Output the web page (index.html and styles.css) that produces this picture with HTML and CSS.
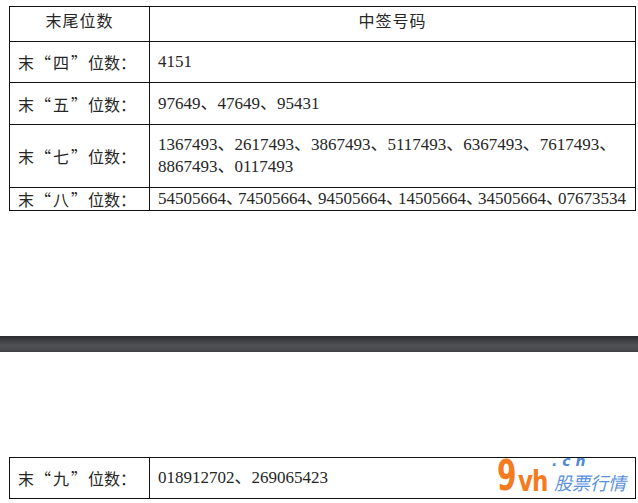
FILE: index.html
```html
<!DOCTYPE html>
<html lang="zh-CN">
<head>
<meta charset="utf-8">
<link rel="stylesheet" href="styles.css">
</head>
<body>
<div class="page">
  <table class="grid">
    <colgroup><col class="c1"><col class="c2"></colgroup>
    <tr class="r-head">
      <th>末尾位数</th>
      <th>中签号码</th>
    </tr>
    <tr class="r-a">
      <td class="lbl">末<span class="ql">“</span>四<span class="qr">”</span>位数：</td>
      <td class="num">4151</td>
    </tr>
    <tr class="r-b">
      <td class="lbl">末<span class="ql">“</span>五<span class="qr">”</span>位数：</td>
      <td class="num">97649、47649、95431</td>
    </tr>
    <tr class="r-c">
      <td class="lbl">末<span class="ql">“</span>七<span class="qr">”</span>位数：</td>
      <td class="num">1367493、2617493、3867493、5117493、6367493、7617493、8867493、0117493</td>
    </tr>
    <tr class="r-d">
      <td class="lbl">末<span class="ql">“</span>八<span class="qr">”</span>位数：</td>
      <td class="num tight">54505664<span class="dun">、</span>74505664<span class="dun">、</span>94505664<span class="dun">、</span>14505664<span class="dun">、</span>34505664<span class="dun">、</span>07673534</td>
    </tr>
  </table>

  <div class="divider"></div>

  <div class="second">
    <table class="grid">
      <colgroup><col class="c1"><col class="c2"></colgroup>
      <tr class="r-e">
        <td class="lbl">末<span class="ql">“</span>九<span class="qr">”</span>位数：</td>
        <td class="num">018912702、269065423</td>
      </tr>
    </table>
    <div class="logo">
      <span class="nine">9</span>
      <span class="vh">vh</span>
      <span class="cn">.cn</span>
      <span class="gp">股票行情</span>
    </div>
  </div>
</div>
</body>
</html>
```

FILE: styles.css
```css
html, body {
  margin: 0;
  padding: 0;
  background: #fff;
}
.page {
  padding-top: 6px;
  font-family: "Liberation Serif", "Noto Sans CJK SC", serif;
  font-size: 17px;
  color: #262626;
}
.grid {
  margin-left: 9px;
  width: 626px;
  border-collapse: collapse;
  table-layout: fixed;
}
.c1 { width: 140px; }
.c2 { width: 486px; }
.grid th, .grid td {
  border: 1px solid #111;
  padding: 0 8px;
  line-height: 22px;
}
.grid th {
  font-weight: normal;
  text-align: center;
  vertical-align: top;
  padding-top: 2px;
  letter-spacing: 1px;
  font-family: "Noto Sans CJK SC", sans-serif;
  font-size: 16px;
}
.lbl {
  font-family: "Noto Sans CJK SC", sans-serif;
  font-size: 16px;
  white-space: nowrap;
}
.ql, .qr {
  display: inline-block;
  width: 17px;
}
.ql { text-align: right; padding-right: 2px; }
.qr { text-align: left; padding-left: 2px; }
.num {
  vertical-align: middle;
}
.r-head { height: 35px; }
.r-a { height: 41px; }
.r-b { height: 42px; }
.r-c { height: 63px; }
.r-d { height: 23px; }
.r-e { height: 41px; }
.tight { white-space: nowrap; }
.dun { letter-spacing: -5px; }
.divider {
  margin-top: 125px;
  height: 16px;
  background: linear-gradient(#2a2b2d, #3f4144 30%, #4f5154 60%, #4a4c4f 85%, #3c3e41);
}
.second {
  position: relative;
  margin-top: 105px;
}
.logo {
  position: absolute;
  left: 496px;
  top: 0;
  width: 140px;
  height: 40px;
  font-family: "DejaVu Sans", sans-serif;
  font-weight: bold;
}
.nine, .vh, .cn, .gp {
  position: absolute;
  white-space: nowrap;
}
.nine {
  left: 1px;
  top: 4px;
  font-size: 28px;
  line-height: 20px;
  color: #f47b20;
  transform: scaleY(1.55);
  transform-origin: left top;
}
.vh {
  left: 22px;
  top: 10px;
  font-size: 23px;
  line-height: 24px;
  color: #f47b20;
  letter-spacing: -1px;
  transform: scaleY(1.2);
  transform-origin: left top;
}
.cn {
  left: 56px;
  top: -3px;
  font-size: 14px;
  font-style: italic;
  color: #4f8ad8;
  letter-spacing: 5px;
  line-height: 14px;
}
.gp {
  left: 58px;
  top: 13px;
  font-family: "Noto Sans CJK SC", sans-serif;
  font-weight: normal;
  font-size: 18px;
  font-style: italic;
  color: #5a92dc;
  line-height: 24px;
}
```
